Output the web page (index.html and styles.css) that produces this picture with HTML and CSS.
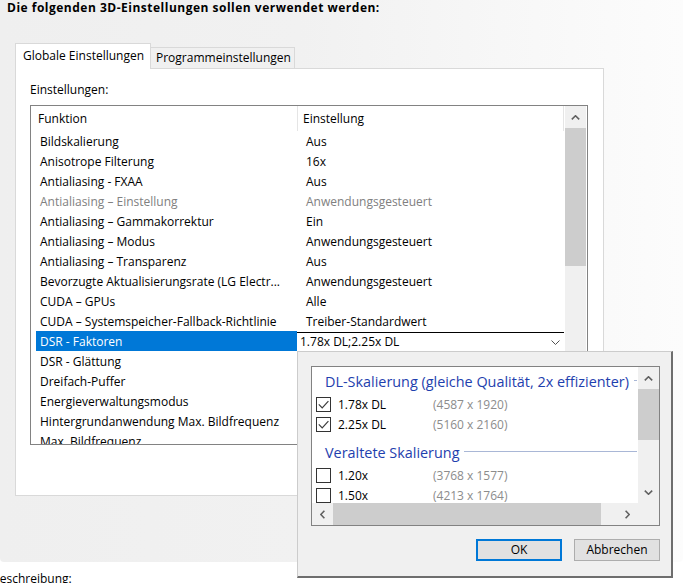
FILE: index.html
```html
<!DOCTYPE html>
<html lang="de">
<head>
<meta charset="utf-8">
<title>3D-Einstellungen</title>
<link rel="stylesheet" href="styles.css">
</head>
<body>
<div class="top">
  <h1 class="title">Die folgenden 3D-Einstellungen sollen verwendet werden:</h1>
  <div class="tabs">
    <div class="tab tab-active">Globale Einstellungen</div>
    <div class="tab tab-inactive">Programmeinstellungen</div>
  </div>
  <div class="panel">
    <div class="label">Einstellungen:</div>
    <div class="list">
      <div class="list-main">
        <div class="list-head">
          <div class="hcol hcol1">Funktion</div>
          <div class="hcol hcol2">Einstellung</div>
        </div>
        <div class="row"><div class="c1">Bildskalierung</div><div class="c2">Aus</div></div>
        <div class="row"><div class="c1">Anisotrope Filterung</div><div class="c2">16x</div></div>
        <div class="row"><div class="c1">Antialiasing - FXAA</div><div class="c2">Aus</div></div>
        <div class="row row-disabled"><div class="c1">Antialiasing – Einstellung</div><div class="c2">Anwendungsgesteuert</div></div>
        <div class="row"><div class="c1">Antialiasing – Gammakorrektur</div><div class="c2">Ein</div></div>
        <div class="row"><div class="c1">Antialiasing – Modus</div><div class="c2">Anwendungsgesteuert</div></div>
        <div class="row"><div class="c1">Antialiasing – Transparenz</div><div class="c2">Aus</div></div>
        <div class="row"><div class="c1">Bevorzugte Aktualisierungsrate (LG Electr...</div><div class="c2">Anwendungsgesteuert</div></div>
        <div class="row"><div class="c1">CUDA – GPUs</div><div class="c2">Alle</div></div>
        <div class="row"><div class="c1">CUDA – Systemspeicher-Fallback-Richtlinie</div><div class="c2">Treiber-Standardwert</div></div>
        <div class="row row-selected">
          <div class="c1">DSR - Faktoren</div>
          <div class="c2 c2-combo">
            <div class="combo">
              <span class="combo-text">1.78x DL;2.25x DL</span>
              <svg class="combo-arrow" width="9" height="5" viewBox="0 0 9 5"><polyline points="0.5,0.5 4.5,4.5 8.5,0.5" fill="none" stroke="#505050" stroke-width="1"/></svg>
            </div>
          </div>
        </div>
        <div class="row"><div class="c1">DSR - Glättung</div><div class="c2"></div></div>
        <div class="row"><div class="c1">Dreifach-Puffer</div><div class="c2"></div></div>
        <div class="row"><div class="c1">Energieverwaltungsmodus</div><div class="c2"></div></div>
        <div class="row"><div class="c1">Hintergrundanwendung Max. Bildfrequenz</div><div class="c2"></div></div>
        <div class="row"><div class="c1">Max. Bildfrequenz</div><div class="c2"></div></div>
      </div>
      <div class="vscroll">
        <div class="sbtn sbtn-v">
          <svg width="9" height="5" viewBox="0 0 9 5"><polyline points="0.8,4.4 4.5,0.8 8.2,4.4" fill="none" stroke="#606060" stroke-width="1.6"/></svg>
        </div>
        <div class="vthumb"></div>
      </div>
    </div>
  </div>
</div>
<div class="desc">Beschreibung:</div>

<div class="popup">
  <div class="pbox">
    <div class="pcontent">
      <div class="group">
        <span class="group-text">DL-Skalierung (gleiche Qualität, 2x effizienter)</span>
        <span class="group-line"></span>
      </div>
      <div class="checks">
        <div class="check">
          <span class="cbox"><svg width="13" height="13" viewBox="0 0 13 13"><polyline points="1.8,6.4 5.2,9.8 11.4,3.2" fill="none" stroke="#3c3c3c" stroke-width="1.2"/></svg></span>
          <span class="clabel">1.78x DL</span>
          <span class="cres">(4587 x 1920)</span>
        </div>
        <div class="check">
          <span class="cbox"><svg width="13" height="13" viewBox="0 0 13 13"><polyline points="1.8,6.4 5.2,9.8 11.4,3.2" fill="none" stroke="#3c3c3c" stroke-width="1.2"/></svg></span>
          <span class="clabel">2.25x DL</span>
          <span class="cres">(5160 x 2160)</span>
        </div>
      </div>
      <div class="group group-2">
        <span class="group-text">Veraltete Skalierung</span>
        <span class="group-line"></span>
      </div>
      <div class="checks">
        <div class="check">
          <span class="cbox"></span>
          <span class="clabel">1.20x</span>
          <span class="cres">(3768 x 1577)</span>
        </div>
        <div class="check">
          <span class="cbox"></span>
          <span class="clabel">1.50x</span>
          <span class="cres">(4213 x 1764)</span>
        </div>
      </div>
    </div>
    <div class="pvscroll">
      <div class="sbtn sbtn-pv">
        <svg width="9" height="5" viewBox="0 0 9 5"><polyline points="0.8,4.4 4.5,0.8 8.2,4.4" fill="none" stroke="#606060" stroke-width="1.6"/></svg>
      </div>
      <div class="pvthumb"></div>
      <div class="ptrack"></div>
      <div class="sbtn sbtn-pv">
        <svg width="9" height="5" viewBox="0 0 9 5"><polyline points="0.8,0.6 4.5,4.2 8.2,0.6" fill="none" stroke="#606060" stroke-width="1.6"/></svg>
      </div>
    </div>
    <div class="phscroll">
      <div class="sbtn sbtn-h1">
        <svg width="5" height="9" viewBox="0 0 5 9"><polyline points="4.4,0.8 0.8,4.5 4.4,8.2" fill="none" stroke="#606060" stroke-width="1.6"/></svg>
      </div>
      <div class="phthumb"></div>
      <div class="ptrack"></div>
      <div class="sbtn sbtn-h2">
        <svg width="5" height="9" viewBox="0 0 5 9"><polyline points="0.6,0.8 4.2,4.5 0.6,8.2" fill="none" stroke="#606060" stroke-width="1.6"/></svg>
      </div>
    </div>
    <div class="pcorner"></div>
  </div>
  <div class="pbuttons">
    <button class="btn btn-default" type="button">OK</button>
    <button class="btn" type="button">Abbrechen</button>
  </div>
</div>
</body>
</html>
```

FILE: styles.css
```css
html, body {
  margin: 0;
  padding: 0;
}

body {
  width: 683px;
  height: 583px;
  overflow: hidden;
  position: relative;
  background: #ffffff;
  font-family: "Open Sans", "Noto Sans", sans-serif;
  font-size: 12px;
  color: #000;
}

.top {
  height: 562px;
  overflow: hidden;
  border-radius: 0 0 4px 4px;
  background: linear-gradient(90deg, #efefef 0px, #f1f1f1 300px, #f7f7f7 500px, #fcfcfc 683px);
}

.title {
  margin: 0;
  padding-left: 7px;
  height: 16px;
  font-size: 12px;
  line-height: 16px;
  font-weight: 700;
  letter-spacing: 0.5px;
  white-space: nowrap;
}

.tabs {
  display: flex;
  align-items: flex-end;
  height: 25px;
  margin: 27px 0 0 15px;
  position: relative;
  z-index: 1;
}

.tab {
  box-sizing: border-box;
  border: 1px solid #d9d9d9;
  border-bottom: 0;
  white-space: nowrap;
}

.tab-active {
  width: 136px;
  height: 26px;
  margin-bottom: -1px;
  padding: 1px 0 0 7px;
  line-height: 22px;
  background: #ffffff;
}

.tab-inactive {
  width: 144px;
  height: 21px;
  border-left: 0;
  padding-left: 5px;
  line-height: 20px;
  background: #f0f0f0;
}

.panel {
  box-sizing: border-box;
  width: 589px;
  height: 428px;
  margin-left: 15px;
  padding: 13px 0 0 14px;
  border: 1px solid #d9d9d9;
  background: #ffffff;
}

.label {
  line-height: 16px;
  height: 16px;
}

.list {
  box-sizing: border-box;
  width: 558px;
  height: 340px;
  margin-top: 7px;
  border: 1px solid #828282;
  background: #fff;
  display: flex;
  overflow: hidden;
}

.list-main {
  width: 534px;
  flex: none;
}

.list-head {
  display: flex;
  height: 25px;
  line-height: 24px;
}

.hcol {
  box-sizing: border-box;
  padding-top: 1px;
  border-right: 1px solid #e5e5e5;
  white-space: nowrap;
}

.hcol1 {
  width: 267px;
  padding-left: 7px;
}

.hcol2 {
  width: 266px;
  padding-left: 5px;
}

.row {
  display: flex;
  height: 20px;
  white-space: nowrap;
}

.c1,
.c2 {
  box-sizing: border-box;
  height: 20px;
  padding-top: 1px;
  line-height: 19px;
  overflow: hidden;
}

.c1 {
  width: 261px;
  margin-left: 5px;
  padding-left: 4px;
}

.c2 {
  width: 267px;
  padding-left: 9px;
}

.row-disabled {
  color: #808080;
}

.row-selected .c1 {
  background: #0078d7;
  color: #ffffff;
}

.c2-combo {
  padding: 0;
  overflow: visible;
}

.combo {
  box-sizing: border-box;
  height: 20px;
  margin-top: 1px;
  border-top: 1px solid #000;
  border-bottom: 1px solid #000;
  background: #fff;
  display: flex;
  align-items: center;
  justify-content: space-between;
  padding: 0 4px 0 3px;
  line-height: 18px;
}

.combo-arrow {
  display: block;
}

.vscroll {
  width: 21px;
  flex: none;
  background: #f0f0f0;
  display: flex;
  flex-direction: column;
}

.sbtn {
  display: flex;
  align-items: center;
  justify-content: center;
  flex: none;
}

.sbtn svg {
  display: block;
}

.sbtn-v {
  height: 22px;
}

.vthumb {
  height: 138px;
  background: #cdcdcd;
}

/* popup */
.popup {
  position: absolute;
  left: 297px;
  top: 351px;
  box-sizing: border-box;
  width: 376px;
  height: 227px;
  padding: 14px 11px 0 13px;
  background: #f0f0f0;
  border-top: 1px solid #cccccc;
  border-left: 1px solid #cccccc;
  border-right: 2px solid #6e6e6e;
  border-bottom: 2px solid #6e6e6e;
  z-index: 5;
}

.pbox {
  box-sizing: border-box;
  width: 349px;
  height: 160px;
  border: 1px solid #828282;
  background: #fff;
  display: grid;
  grid-template-columns: 326px 21px;
  grid-template-rows: 136px 22px;
}

.pcontent {
  overflow: hidden;
}

.group {
  display: flex;
  align-items: center;
  height: 22px;
  margin-top: 3px;
  padding-left: 13px;
  padding-right: 1px;
  color: #1e40ae;
  font-size: 14.4px;
  white-space: nowrap;
}

.group-2 {
  margin-top: 7px;
}

.group-line {
  flex: 1;
  height: 1px;
  margin-left: 5px;
  margin-top: -1px;
  background: #a9b7d6;
}

.checks {
  margin-top: 2px;
}

.check {
  display: flex;
  align-items: center;
  height: 20px;
  padding-left: 4px;
  white-space: nowrap;
}

.cbox {
  box-sizing: border-box;
  width: 15px;
  height: 15px;
  border: 1px solid #333333;
  background: #fff;
  margin-right: 7px;
  flex: none;
}

.cbox svg {
  display: block;
}

.clabel {
  width: 95px;
  flex: none;
}

.cres {
  color: #8c8c8c;
}

.pvscroll {
  background: #f0f0f0;
  display: flex;
  flex-direction: column;
}

.sbtn-pv {
  height: 22px;
}

.pvthumb {
  height: 51px;
  background: #cdcdcd;
  flex: none;
}

.ptrack {
  flex: 1;
}

.phscroll {
  background: #f0f0f0;
  display: flex;
}

.sbtn-h1 {
  width: 21px;
}

.sbtn-h2 {
  width: 22px;
}

.phthumb {
  width: 268px;
  flex: none;
  background: #cdcdcd;
}

.pcorner {
  background: #f0f0f0;
}

.pbuttons {
  display: flex;
  justify-content: flex-end;
  gap: 12px;
  margin-top: 13px;
  width: 349px;
}

.btn {
  box-sizing: border-box;
  width: 86px;
  height: 22px;
  margin: 0;
  padding: 0;
  border: 1px solid #adadad;
  background: #e1e1e1;
  font-family: "Open Sans", "Noto Sans", sans-serif;
  font-size: 12px;
  color: #000;
  line-height: 18px;
}

.btn-default {
  border: 2px solid #0078d7;
}

.desc {
  margin: 9px 0 0 -8px;
  line-height: 16px;
  white-space: nowrap;
}
```
